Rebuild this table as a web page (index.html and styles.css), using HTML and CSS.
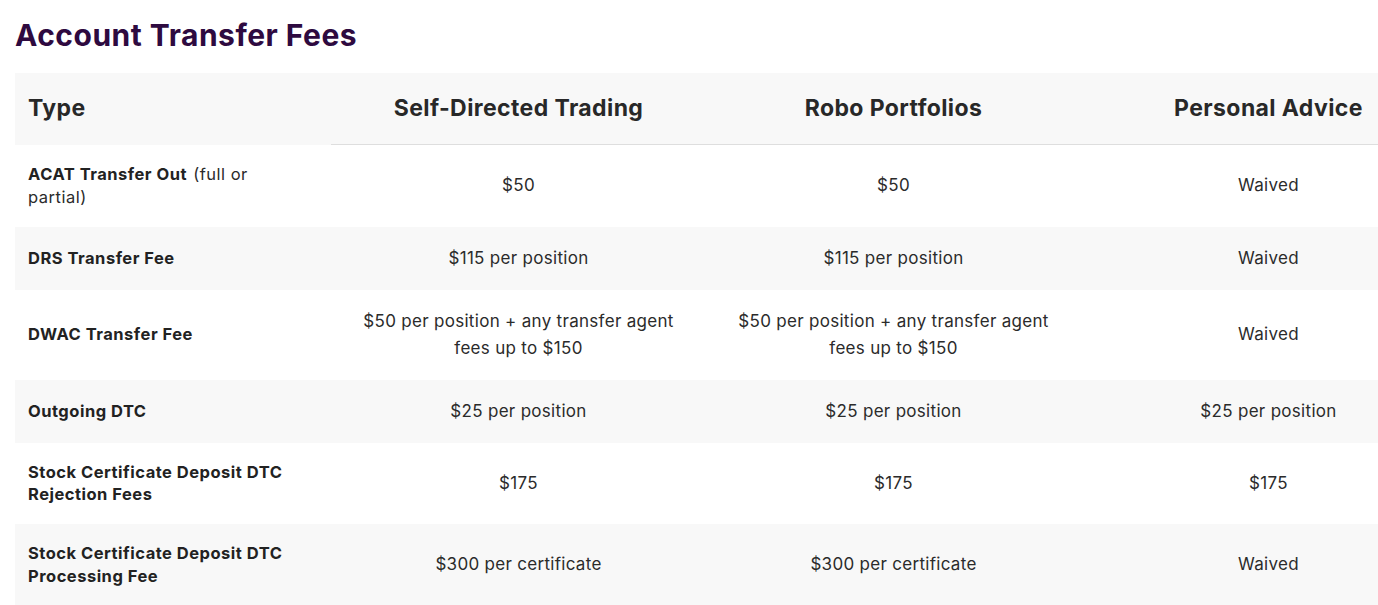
FILE: index.html
```html
<!DOCTYPE html>
<html lang="en">
<head>
<meta charset="utf-8">
<title>Account Transfer Fees</title>
<link rel="stylesheet" href="styles.css">
</head>
<body>
<div class="page">
  <h2 class="title">Account Transfer Fees</h2>
  <div class="table-wrap">
    <table class="fees">
      <colgroup>
        <col class="c-type">
        <col class="c-val">
        <col class="c-val">
        <col class="c-val">
      </colgroup>
      <thead>
        <tr>
          <th class="th-type">Type</th>
          <th>Self-Directed Trading</th>
          <th>Robo Portfolios</th>
          <th>Personal Advice</th>
        </tr>
      </thead>
      <tbody>
        <tr>
          <td class="type"><strong>ACAT Transfer Out</strong> (full or partial)</td>
          <td>$50</td>
          <td>$50</td>
          <td>Waived</td>
        </tr>
        <tr>
          <td class="type"><strong>DRS Transfer Fee</strong></td>
          <td>$115 per position</td>
          <td>$115 per position</td>
          <td>Waived</td>
        </tr>
        <tr>
          <td class="type"><strong>DWAC Transfer Fee</strong></td>
          <td>$50 per position + any transfer agent fees up to $150</td>
          <td>$50 per position + any transfer agent fees up to $150</td>
          <td>Waived</td>
        </tr>
        <tr>
          <td class="type"><strong>Outgoing DTC</strong></td>
          <td>$25 per position</td>
          <td>$25 per position</td>
          <td>$25 per position</td>
        </tr>
        <tr>
          <td class="type"><strong>Stock Certificate Deposit DTC Rejection Fees</strong></td>
          <td>$175</td>
          <td>$175</td>
          <td>$175</td>
        </tr>
        <tr>
          <td class="type"><strong>Stock Certificate Deposit DTC Processing Fee</strong></td>
          <td>$300 per certificate</td>
          <td>$300 per certificate</td>
          <td>Waived</td>
        </tr>
      </tbody>
    </table>
  </div>
</div>
</body>
</html>
```
FILE: styles.css
```css
* { box-sizing: border-box; }
html, body { margin: 0; padding: 0; background: #ffffff; }
body {
  font-family: Inter, "Noto Sans", "Liberation Sans", sans-serif;
  color: #2b2b2b;
  overflow: hidden;
}
.page {
  padding: 14px 0 0 15px;
}
.title {
  margin: 0 0 17px 0;
  font-size: 30px;
  line-height: 42px;
  font-weight: 700;
  color: #2e0a40;
  letter-spacing: 0.5px;
}
.table-wrap {
  overflow: hidden;
}
.fees {
  border-collapse: collapse;
  table-layout: fixed;
  width: 1441px;
}
.c-type { width: 316px; }
.c-val { width: 375px; }
.fees th {
  background: #f8f8f8;
  font-size: 23px;
  font-weight: 700;
  line-height: 30px;
  letter-spacing: 0.4px;
  padding: 20px 13px 21px;
  text-align: center;
  color: #282828;
  border-bottom: 1px solid #dedede;
}
.fees th.th-type {
  text-align: left;
  border-bottom-color: #f8f8f8;
}
.fees td {
  font-size: 17px;
  line-height: 27px;
  letter-spacing: 0.3px;
  padding: 18px 13px;
  text-align: center;
  vertical-align: middle;
  color: #2b2b2b;
}
.fees td.type {
  text-align: left;
  font-size: 16.5px;
  letter-spacing: 0.5px;
  line-height: 22.8px;
  padding-right: 40px;
}
.fees td.type strong {
  font-weight: 700;
  color: #222222;
  margin-right: 1px;
}
.fees tbody tr:nth-child(even) td {
  background: #f8f8f8;
}
```
